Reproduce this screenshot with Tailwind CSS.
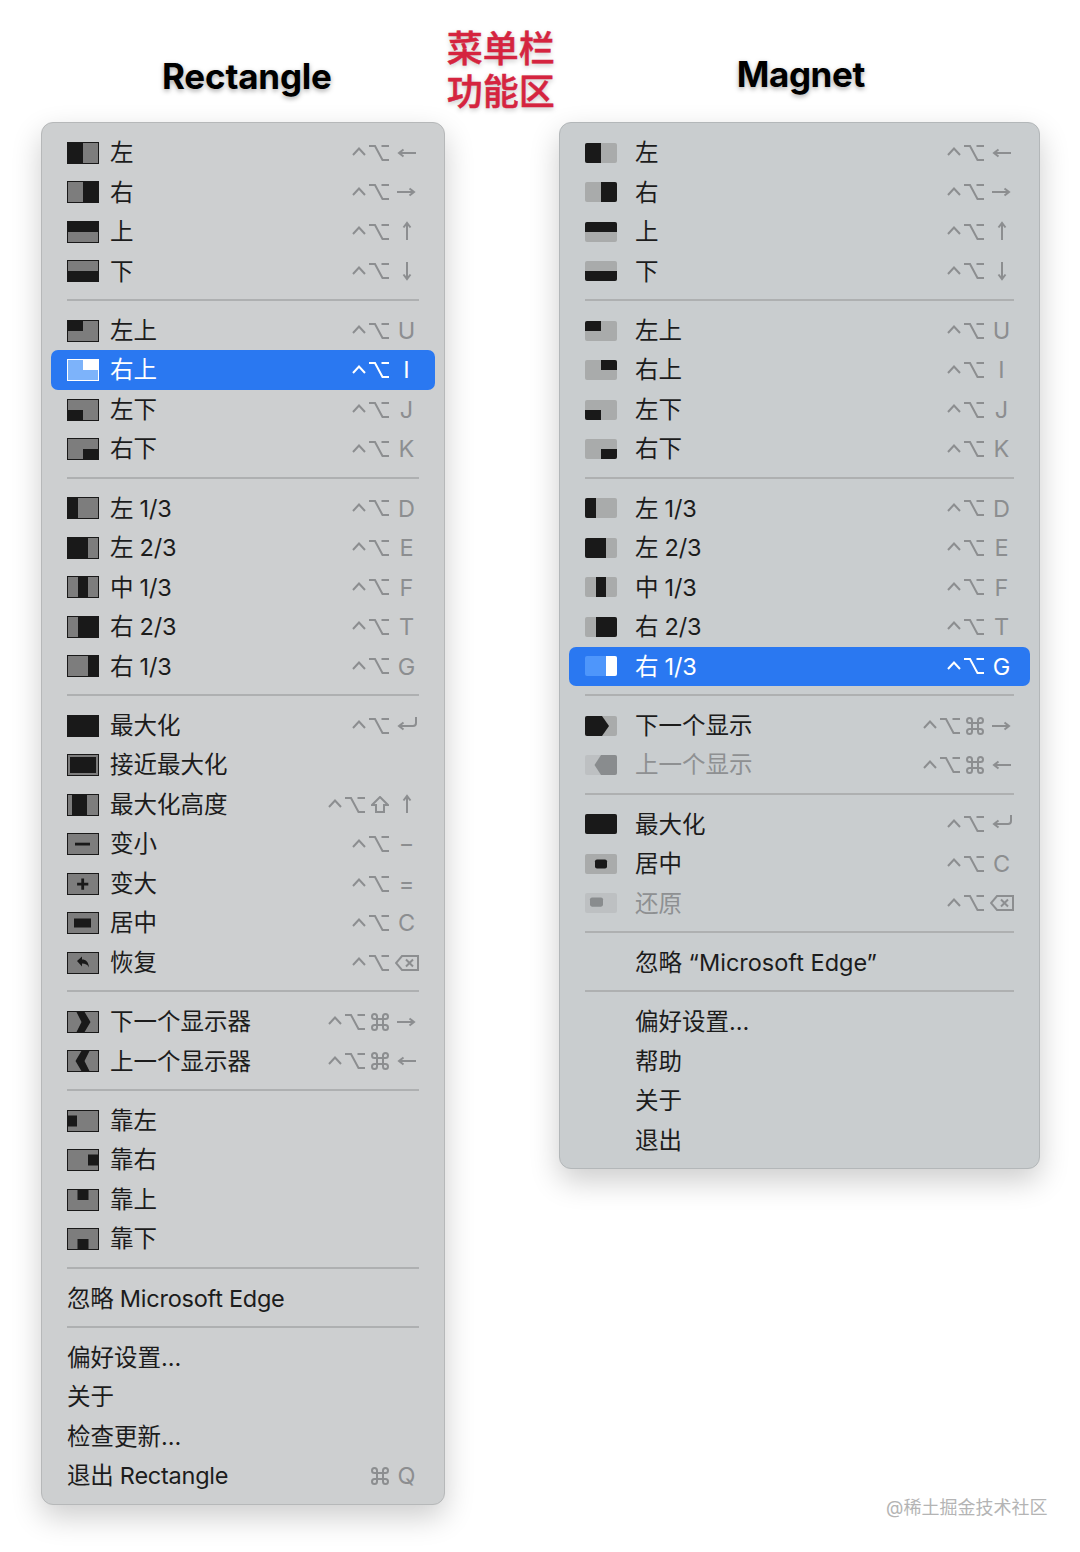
<!DOCTYPE html>
<html lang="zh-CN">

<head>
  <meta charset="UTF-8">
  <title>Rectangle / Magnet</title>
  <script src="https://cdn.jsdelivr.net/npm/@tailwindcss/browser@4"></script>
</head>

<body class="relative h-[1552px] w-[1080px] overflow-hidden bg-white font-['Inter','Noto_Sans_CJK_SC',sans-serif] text-[#1c1c1c]">

  <!-- Titles -->
  <header class="flex h-[122px]">
    <h2 class="ml-[162px] mt-[55px] h-[42px] text-[35px] leading-[42px] font-bold tracking-[-0.2px] text-black [text-shadow:0_2px_5px_rgba(0,0,0,0.35)]">Rectangle</h2>
    <div class="ml-[115px] mt-[28px] text-[36px] leading-[43px] font-medium text-[#d5243f] [-webkit-text-stroke:0.5px_#d5243f] [text-shadow:0_2px_5px_rgba(0,0,0,0.25)]">菜单栏<br>功能区</div>
    <h2 class="ml-[182px] mt-[53px] h-[42px] text-[35px] leading-[42px] font-bold tracking-[-0.4px] text-black [text-shadow:0_2px_5px_rgba(0,0,0,0.35)]">Magnet</h2>
  </header>

  <!-- Menus -->
  <main class="flex items-start">
    <div id="rectangleMenu" class="ml-[41px] w-[404px] rounded-xl border border-[#b6b8b9] bg-[#cdcfd0] pt-[10px] pb-[8.5px] shadow-[0_12px_30px_rgba(0,0,0,0.2)]"></div>
    <div id="magnetMenu" class="ml-[114px] w-[481px] rounded-xl border border-[#b3b7b9] bg-[#c9cdcf] pt-[10px] pb-[7.5px] shadow-[0_12px_30px_rgba(0,0,0,0.2)]"></div>
  </main>

  <div class="absolute left-[886px] top-[1497px] text-[18px] leading-[22px] text-[#b4b4b4]">@稀土掘金技术社区</div>

  <script>
    // Window shapes, in a 32x22 box
    const shapes = {
      left: '<rect width="16" height="22"/>',
      right: '<rect x="16" width="16" height="22"/>',
      top: '<rect width="32" height="11"/>',
      bottom: '<rect y="11" width="32" height="11"/>',
      tl: '<rect width="16" height="11"/>',
      tr: '<rect x="16" width="16" height="11"/>',
      bl: '<rect y="11" width="16" height="11"/>',
      br: '<rect x="16" y="11" width="16" height="11"/>',
      l13: '<rect width="11" height="22"/>',
      l23: '<rect width="21" height="22"/>',
      c13: '<rect x="11" width="10" height="22"/>',
      r23: '<rect x="11" width="21" height="22"/>',
      r13: '<rect x="21" width="11" height="22"/>',
      max: '<rect width="32" height="22"/>',
      almost: '<rect x="3" y="3" width="26" height="16"/>',
      maxh: '<rect x="5" width="15" height="22"/>',
      small: '<rect x="8" y="9.700" width="15" height="2.800"/>',
      big: '<path d="M14.300 5.500h2.800v4.200h4.200v2.800h-4.200v4.200h-2.800v-4.200h-4.200V9.700h4.200z"/>',
      center: '<rect x="7" y="6.500" width="17" height="9"/>',
      restore: '<path d="M10 9l5-4.500v3c4 0 6.500 2.500 7 8-1.500-3-3.500-4-7-4v3z"/>',
      next: '<path d="M9 0h8l6.500 11L17 22H9l5.500-11z"/>',
      prev: '<path d="M23 0h-8L8.500 11 15 22h8l-5.500-11z"/>',
      edgeL: '<rect y="5.500" width="10" height="11"/>',
      edgeR: '<rect x="21" y="5.500" width="11" height="11"/>',
      edgeT: '<rect x="10.500" width="11" height="11"/>',
      edgeB: '<rect x="10.500" y="11" width="11" height="11"/>',
      dispNext: '<path d="M0 0h17l7 11-7 11H0z"/>',
      dispPrev: '<path d="M32 0H16L9.500 11 16 22h16z"/>',
      centerSmall: '<rect x="10" y="6" width="12" height="10" rx="2"/>',
      restoreSmall: '<rect x="5" y="5" width="13" height="10" rx="2"/>'
    };

    // Left menu icons have a dark outline, right menu icons are plain rounded blocks
    function icon(shape, outlined, active, dim) {
      if (!shape) return '';
      let back = outlined ? '#7d7d7d' : '#a9abab';
      let front = '#191919';
      if (active) { back = outlined ? '#7db3fa' : '#4e96fb'; front = '#ffffff'; }
      if (dim) { back = '#bdc0c2'; front = '#898c8e'; }
      const border = outlined
        ? `<rect x="0.5" y="0.5" width="31" height="21" fill="none" stroke="${active ? '#ffffff' : '#191919'}"/>`
        : '';
      const clip = outlined ? '' : 'rounded-[2px]';
      return `<svg class="block ${clip}" width="32" height="${outlined ? 22 : 20}" viewBox="0 0 32 22" preserveAspectRatio="none">
        <rect width="32" height="22" fill="${back}"/><g fill="${front}">${shapes[shape]}</g>${border}</svg>`;
    }

    // Shortcut key symbols
    const keys = {
      ctrl: '<svg class="block -mt-[2px]" width="14" height="9" viewBox="0 0 14 9"><path d="M1 8l6-6.500L13 8"/></svg>',
      opt: '<svg class="block" width="20" height="18" viewBox="0 0 20 18"><path d="M0 2h6l7.500 14H20M12.500 2H20"/></svg>',
      cmd: '<svg class="block" width="18" height="18" viewBox="0 0 18 18"><path d="M6 6V3.500A2.500 2.500 0 1 0 3.500 6h11A2.500 2.500 0 1 0 12 3.500v11a2.500 2.500 0 1 0 2.500-2.500h-11A2.500 2.500 0 1 0 6 14.500z"/></svg>',
      shift: '<svg class="block" width="18" height="17" viewBox="0 0 18 17"><path d="M9 1l8 8h-4v7H5V9H1z"/></svg>',
      larr: '<svg class="block" width="19" height="14" viewBox="0 0 19 14"><path d="M19 7H2M6.500 3.500L2 7l4.500 3.500"/></svg>',
      rarr: '<svg class="block" width="19" height="14" viewBox="0 0 19 14"><path d="M0 7h17M12.500 3.500L17 7l-4.500 3.500"/></svg>',
      uarr: '<svg class="block -mt-[3px]" width="12" height="19" viewBox="0 0 12 19"><path d="M6 19V2M2.500 6.500L6 2l3.500 4.500"/></svg>',
      darr: '<svg class="block" width="12" height="19" viewBox="0 0 12 19"><path d="M6 0v17M2.500 12.500L6 17l3.500-4.500"/></svg>',
      ret: '<svg class="block -mt-[3px]" width="20" height="15" viewBox="0 0 20 15"><path d="M19 0v6a3 3 0 0 1-3 3H2M6.500 5.500L2 9l4.500 3.500"/></svg>',
      del: '<svg class="block" width="24" height="16" viewBox="0 0 24 16"><path d="M7 1h16v14H7L1 8zM11 4.500l7 7M18 4.500l-7 7"/></svg>'
    };

    function shortcut(mods, key, active) {
      if (!key) return '';
      const tone = active ? 'text-white' : 'text-[#8c8e90]';
      const symbol = keys[key]
        ? keys[key]
        : `<span class="text-[23.500px] leading-none">${key}</span>`;
      const extra = mods ? `<span class="ml-[6px]">${keys[mods]}</span>` : '';
      return `<div class="ml-auto flex items-center ${tone} fill-none stroke-current stroke-[2]">
        <span class="mr-[3px]">${keys.ctrl}</span>${keys.opt}${extra}
        <span class="ml-[6px] flex w-[24px] justify-center">${symbol}</span>
      </div>`;
    }

    // [label, icon, extra modifier, key, state]
    const rectangleMenu = [
      [['左', 'left', '', 'larr'], ['右', 'right', '', 'rarr'], ['上', 'top', '', 'uarr'], ['下', 'bottom', '', 'darr']],
      [['左上', 'tl', '', 'U'], ['右上', 'tr', '', 'I', 'active'], ['左下', 'bl', '', 'J'], ['右下', 'br', '', 'K']],
      [['左 1/3', 'l13', '', 'D'], ['左 2/3', 'l23', '', 'E'], ['中 1/3', 'c13', '', 'F'], ['右 2/3', 'r23', '', 'T'], ['右 1/3', 'r13', '', 'G']],
      [['最大化', 'max', '', 'ret'], ['接近最大化', 'almost'], ['最大化高度', 'maxh', 'shift', 'uarr'], ['变小', 'small', '', '−'], ['变大', 'big', '', '='], ['居中', 'center', '', 'C'], ['恢复', 'restore', '', 'del']],
      [['下一个显示器', 'next', 'cmd', 'rarr'], ['上一个显示器', 'prev', 'cmd', 'larr']],
      [['靠左', 'edgeL'], ['靠右', 'edgeR'], ['靠上', 'edgeT'], ['靠下', 'edgeB']],
      [['忽略 Microsoft Edge']],
      [['偏好设置…'], ['关于'], ['检查更新…'], ['退出 Rectangle', '', '', 'Q', 'cmdonly']]
    ];

    const magnetMenu = [
      [['左', 'left', '', 'larr'], ['右', 'right', '', 'rarr'], ['上', 'top', '', 'uarr'], ['下', 'bottom', '', 'darr']],
      [['左上', 'tl', '', 'U'], ['右上', 'tr', '', 'I'], ['左下', 'bl', '', 'J'], ['右下', 'br', '', 'K']],
      [['左 1/3', 'l13', '', 'D'], ['左 2/3', 'l23', '', 'E'], ['中 1/3', 'c13', '', 'F'], ['右 2/3', 'r23', '', 'T'], ['右 1/3', 'r13', '', 'G', 'active']],
      [['下一个显示', 'dispNext', 'cmd', 'rarr'], ['上一个显示', 'dispPrev', 'cmd', 'larr', 'dim']],
      [['最大化', 'max', '', 'ret'], ['居中', 'centerSmall', '', 'C'], ['还原', 'restoreSmall', '', 'del', 'dim']],
      [['忽略 “Microsoft Edge”', 'none']],
      [['偏好设置…', 'none'], ['帮助', 'none'], ['关于', 'none'], ['退出', 'none']]
    ];

    function renderMenu(id, groups, outlined) {
      const html = groups.map(group => {
        const rows = group.map(([label, shape, mods, key, state]) => {
          const active = state === 'active';
          const dim = state === 'dim';
          const rowTone = active ? 'bg-[#2a78f1] text-white' : dim ? 'text-[#8e9092]' : '';
          const slot = outlined ? 'w-[43px]' : 'w-[50px]';
          const iconSlot = shape
            ? `<span class="${slot} shrink-0">${shape === 'none' ? '' : icon(shape, outlined, active, dim)}</span>`
            : '';
          const labelTone = /[a-z0-9]/i.test(label) && !label.includes('“') ? 'tracking-[-0.25px]' : '';
          const right = state === 'cmdonly'
            ? `<div class="ml-auto flex items-center text-[#8c8e90] fill-none stroke-current stroke-[2]">${keys.cmd}<span class="ml-[6px] flex w-[24px] justify-center text-[23.500px] leading-none">${key}</span></div>`
            : shortcut(mods, key, active);
          return `<div class="mx-[9px] flex h-[39.500px] items-center rounded-[7px] pl-[16px] pr-[16.500px] text-[23.500px] whitespace-nowrap ${rowTone}">${iconSlot}<span class="${labelTone}">${label}</span>${right}</div>`;
        });
        return rows.join('');
      }).join('<div class="mx-[25px] flex h-[19.750px] items-center pb-[1.500px]"><div class="h-[2px] w-full bg-[#aeb0b1]"></div></div>');
      document.getElementById(id).innerHTML = html;
    }

    renderMenu('rectangleMenu', rectangleMenu, true);
    renderMenu('magnetMenu', magnetMenu, false);
  </script>

</body>

</html>
